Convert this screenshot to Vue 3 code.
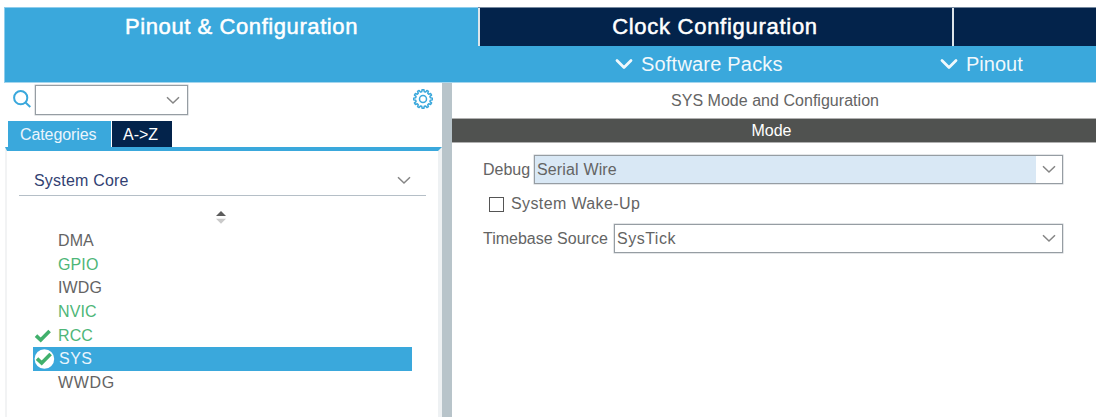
<script setup>
const items = [
  { name: 'DMA' },
  { name: 'GPIO', on: true },
  { name: 'IWDG' },
  { name: 'NVIC', on: true },
  { name: 'RCC', on: true, check: true },
  { name: 'SYS', check: true, selected: true },
  { name: 'WWDG', wide: true },
]

// Outline of a cog with twelve rounded teeth, centred on 10,10
const teeth = 12
let gear = ''
for (let i = 0; i < teeth; i++) {
  const step = (Math.PI * 2) / teeth
  const at = (r, f) => {
    const a = step * (i + f) - Math.PI / 2
    return `${(10 + r * Math.cos(a)).toFixed(2)} ${(10 + r * Math.sin(a)).toFixed(2)}`
  }
  gear += `${i ? 'L' : 'M'}${at(7.4, -0.32)}L${at(9.4, -0.18)}L${at(9.4, 0.18)}L${at(7.4, 0.32)}`
}
gear += 'Z'
</script>

<template>
  <div class="app">
    <header class="top">
      <nav class="tabs">
        <div class="tab active"><span class="t-pinout">Pinout &amp; Configuration</span></div>
        <div class="tab"><span class="t-clock">Clock Configuration</span></div>
        <div class="tab"></div>
      </nav>
      <div class="menus">
        <div class="menu packs">
          <svg width="18" height="12" viewBox="0 0 18 12"><path d="M2 2.5L9 9.5L16 2.5" /></svg>
          <span>Software Packs</span>
        </div>
        <div class="menu pinout">
          <svg width="18" height="12" viewBox="0 0 18 12"><path d="M2 2.5L9 9.5L16 2.5" /></svg>
          <span>Pinout</span>
        </div>
      </div>
    </header>

    <main class="body">
      <aside class="left">
        <div class="search">
          <svg class="lens" width="20" height="20" viewBox="0 0 20 20">
            <circle cx="8.7" cy="7.7" r="6.6" /><path d="M13.5 12.5L18.3 17" />
          </svg>
          <div class="combo small">
            <svg class="chev" width="14" height="9" viewBox="0 0 14 9"><path d="M1 1.2L7 7L13 1.2" /></svg>
          </div>
          <svg class="gear" width="20" height="20" viewBox="0 0 20 20">
            <path :d="gear" /><circle cx="10" cy="10" r="3.5" />
          </svg>
        </div>
        <div class="subtabs">
          <div class="sub cat"><span>Categories</span></div>
          <div class="sub az"><span>A-&gt;Z</span></div>
        </div>
        <div class="panel">
          <div class="group">
            <span>System Core</span>
            <svg class="chev" width="14" height="9" viewBox="0 0 14 9"><path d="M1 1.2L7 7L13 1.2" /></svg>
          </div>
          <div class="sort">
            <svg width="12" height="16" viewBox="0 0 12 16">
              <path d="M1 6L6 1L11 6Z" fill="#5c5c5c" /><path d="M1 8.8H11L6 13.8Z" fill="#cacaca" />
            </svg>
          </div>
          <ul class="list">
            <li v-for="it in items" :key="it.name" :class="{ on: it.on, selected: it.selected, wide: it.wide }">
              <span class="mark">
                <svg v-if="it.check" width="22" height="20" viewBox="0 0 22 20">
                  <circle v-if="it.selected" cx="11.4" cy="10" r="9.8" fill="#fff" />
                  <path class="tick" :class="{ low: !it.selected }" d="M4 9.6L8.7 14L17.6 5" />
                </svg>
              </span>
              <span class="name">{{ it.name }}</span>
            </li>
          </ul>
        </div>
      </aside>
      <div class="divider"></div>
      <section class="right">
        <h1><span>SYS Mode and Configuration</span></h1>
        <h2><span>Mode</span></h2>
        <div class="form">
          <div class="row">
            <label class="l-debug">Debug</label>
            <div class="combo filled">
              <span class="v-debug">Serial Wire</span>
              <svg class="chev" width="14" height="9" viewBox="0 0 14 9"><path d="M1 1.2L7 7L13 1.2" /></svg>
            </div>
          </div>
          <div class="row wake"><i class="box"></i><span>System Wake-Up</span></div>
          <div class="row">
            <label class="l-time">Timebase Source</label>
            <div class="combo">
              <span class="v-time">SysTick</span>
              <svg class="chev" width="14" height="9" viewBox="0 0 14 9"><path d="M1 1.2L7 7L13 1.2" /></svg>
            </div>
          </div>
        </div>
      </section>
    </main>
  </div>
</template>

<style>
body { margin: 0; background: #fff; overflow: hidden; }
</style>

<style scoped>
* { box-sizing: border-box; }
svg { display: block; flex: none; fill: none; }
span, label { white-space: nowrap; }
.app {
  width: 1096px; height: 417px; display: flex; flex-direction: column; overflow: hidden;
  font: 16px/20px "Liberation Sans", Arial, sans-serif; color: #646464; background: #fff;
}
.top { margin: 7px 0 0 4px; height: 76px; background: #3aa8dc; border-top: 1px solid #8fcdec; border-left: 1px solid #8fcdec; flex: none; border-bottom: 1px solid #a5d6ee; }
.tabs { display: grid; grid-template-columns: 473px 474px 1fr; height: 37px; }
.tab { background: #03234b; border-left: 2px solid #dde5ea; display: flex; justify-content: center; color: #fff; font-size: 22px; line-height: 38px; box-shadow: 0 -1px #76899f; -webkit-text-stroke: 0.5px #fff; }
.tab.active { background: #3aa8dc; border: 0; box-shadow: none; }
.t-pinout { letter-spacing: .58px; }
.t-clock { letter-spacing: .72px; margin-left: -2px; }
.menus { display: flex; height: 37px; }
.menu { display: flex; align-items: center; gap: 8px; color: #fff; font-size: 20px; opacity: .93; }
.menu path { stroke: #fff; stroke-width: 2.8; stroke-linecap: round; stroke-linejoin: round; }
.packs { margin-left: 610px; width: 325px; letter-spacing: .2px; }
.body { flex: 1; display: flex; min-height: 0; }
.left { width: 442px; flex: none; display: flex; flex-direction: column; }
.search { display: flex; height: 38px; padding: 2px 0 0 12px; align-items: flex-start; }
.lens { margin-top: 5px; stroke: #3aa8dc; stroke-width: 2; }
.gear { margin: 4px 0 0 225px; stroke: #3aa8dc; stroke-width: 1.5; stroke-linejoin: round; }
.combo { height: 29px; border: 1px solid #969da3; display: flex; align-items: center; justify-content: space-between; padding: 0 6px 0 2px; flex: 1; background: #fff; box-shadow: 0 0 0 .5px #c8ccd0; }
.combo.small { flex: none; width: 153px; height: 30px; margin-left: 3px; justify-content: flex-end; padding-right: 7px; }
.combo.filled { background: linear-gradient(90deg, #d9e8f5 calc(100% - 26px), #fff 0); }
.chev { stroke: #858585; stroke-width: 1.5; }
.subtabs { display: flex; height: 26px; margin-left: 8px; color: #eaf5fc; line-height: 27px; gap: 1px; }
.sub { display: flex; padding-left: 12px; }
.cat { width: 103px; background: #3aa8dc; letter-spacing: -.1px; }
.az { width: 60px; background: #03234b; color: #fff; padding-left: 11px; }
.panel { margin-left: 5px; flex: 1; border-top: 4px solid #3aa8dc; border-left: 2px solid #f2f3f4; border-right: 4px solid #eef1f3; }
.group { margin: 15px 12px 0 12px; height: 30px; display: flex; justify-content: space-between; align-items: center; padding: 0 15px 0 15px; border-bottom: 1px solid #b5bfc7; color: #323f72; letter-spacing: .2px; }
.sort { height: 33px; display: flex; padding: 14px 0 0 208px; }
.list { list-style: none; margin: 0; padding: 0 0 0 26px; width: 405px; }
.list li { height: 23.7px; display: flex; align-items: center; letter-spacing: .12px; }
.list .wide { letter-spacing: .7px; }
.mark { width: 25px; flex: none; }
.list .on { color: #4eb678; }
.list .selected { background: #3aa8dc; color: #eaf5fc; letter-spacing: .5px; }
.selected .name { padding-left: 1px; }
.tick { stroke: #41b06c; stroke-width: 3.6; }
.tick.low { transform: translateX(-1px); }
.divider { width: 10px; flex: none; background: #b8c4ca; }
.right { flex: 1; }
h1 { margin: 0; height: 35px; font-size: 16px; font-weight: 400; line-height: 35px; text-align: center; padding-left: 2px; letter-spacing: .03px; }
h2 { margin: 0; height: 25px; background: #505250; border-top: 1px solid #b0b0b0; border-bottom: 1px solid #b0b0b0; color: #fff; font-size: 16px; font-weight: 400; line-height: 23px; text-align: center; padding-right: 5px; }
.form { width: 580px; padding: 12px 0 0 31px; box-sizing: content-box; }
.row { display: flex; align-items: center; width: 580px; height: 29px; }
.row label { flex: none; }
.l-debug { width: 51px; }
.l-time { width: 131px; }
.v-debug { letter-spacing: .15px; }
.v-time { letter-spacing: .5px; }
.wake { height: 40px; padding-left: 6px; letter-spacing: .38px; }
.box { width: 15px; height: 15px; border: 1px solid #555; margin-right: 7px; }
</style>
